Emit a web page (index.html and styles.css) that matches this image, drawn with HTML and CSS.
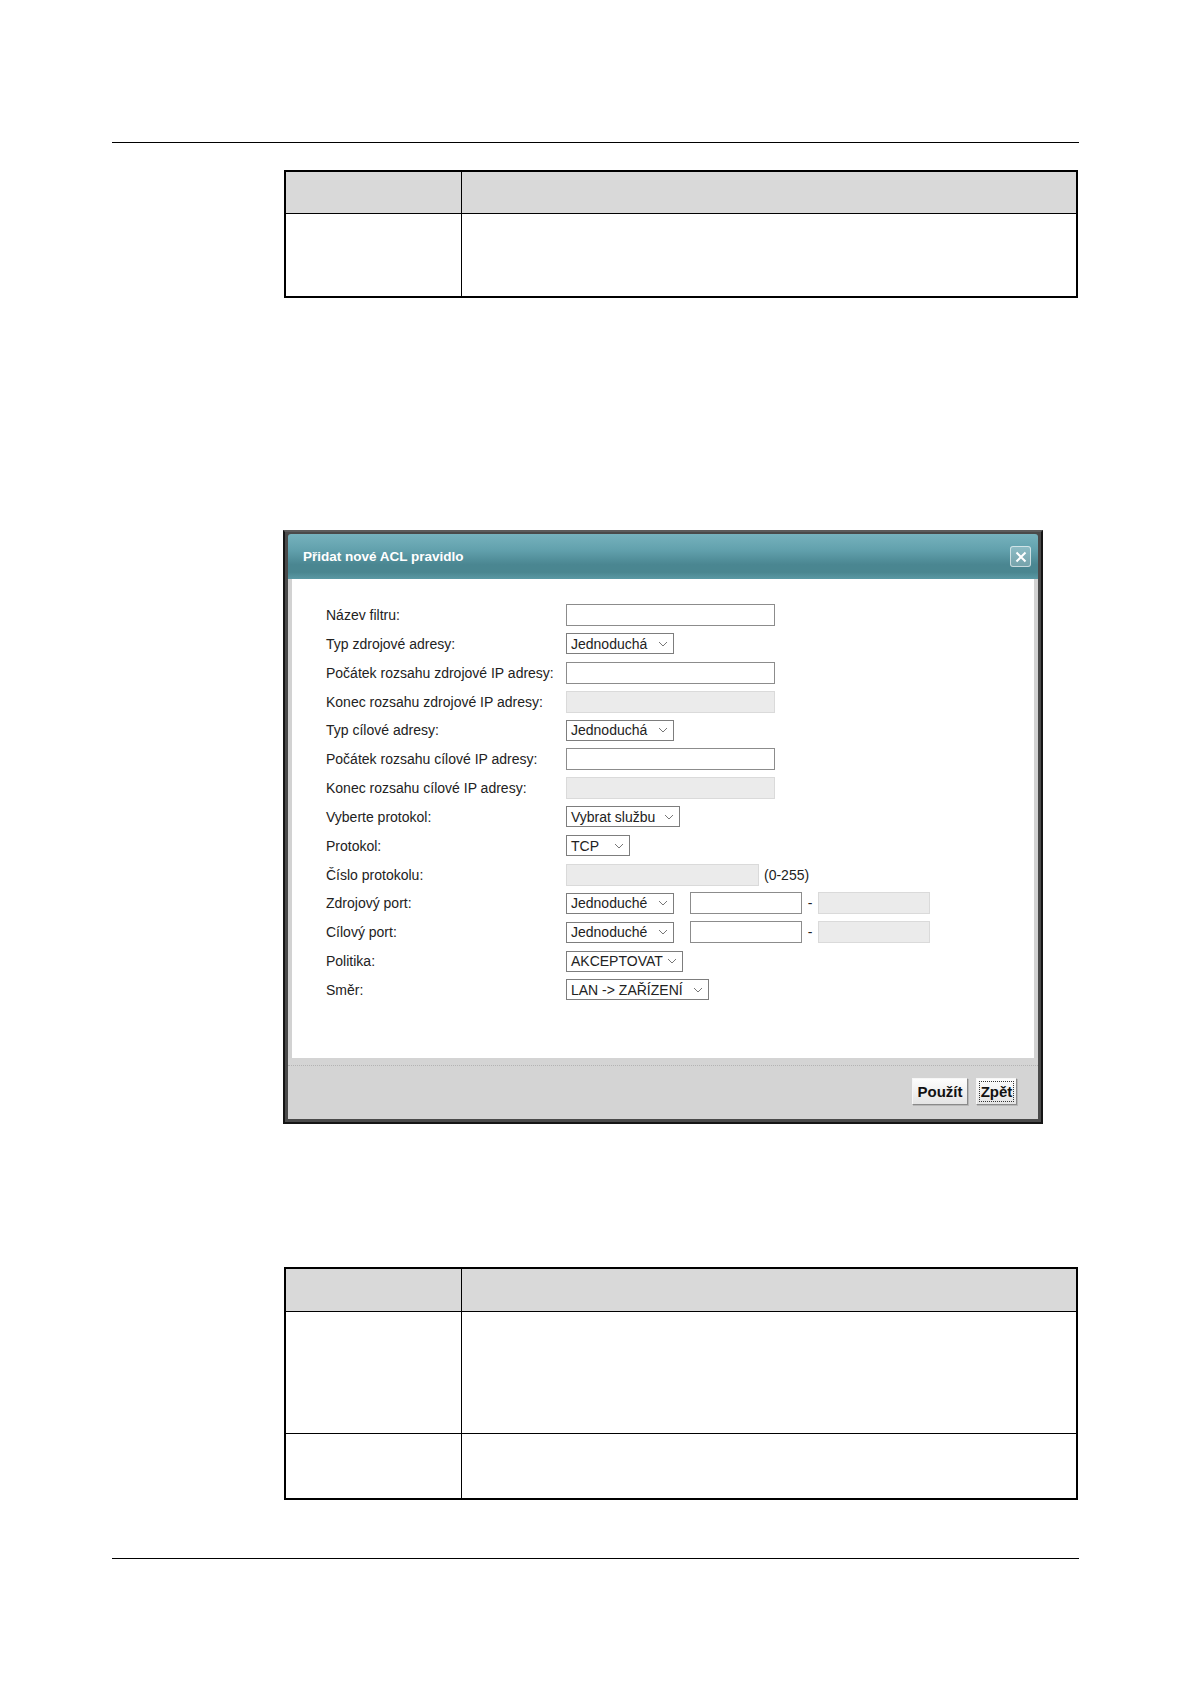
FILE: index.html
```html
<!DOCTYPE html>
<html lang="cs">
<head>
    <meta charset="UTF-8">
    <title>Přidat nové ACL pravidlo</title>
    <link rel="stylesheet" href="styles.css">
</head>
<body>
    <div class="page">
        <div class="rule"></div>

        <table class="doc-table t1">
            <tr class="head"><th class="col1"></th><th></th></tr>
            <tr class="r1"><td class="col1"></td><td></td></tr>
        </table>

        <div class="shot">
            <div class="dialog">
                <div class="dialog-title">
                    <span>Přidat nové ACL pravidlo</span>
                    <button class="close" type="button" aria-label="Zavřít">
                        <svg width="12" height="12" viewBox="0 0 12 12"><path d="M1.5 1.5 L10.5 10.5 M10.5 1.5 L1.5 10.5" stroke="#fff" stroke-width="2" fill="none"/></svg>
                    </button>
                </div>

                <div class="dialog-body">
                    <div class="row">
                        <label>Název filtru:</label>
                        <div class="ctrl"><input class="txt" type="text"></div>
                    </div>
                    <div class="row">
                        <label>Typ zdrojové adresy:</label>
                        <div class="ctrl"><div class="sel w108"><span>Jednoduchá</span><svg width="10" height="6" viewBox="0 0 10 6"><path d="M1 1 L5 5 L9 1" stroke="#777" fill="none"/></svg></div></div>
                    </div>
                    <div class="row">
                        <label>Počátek rozsahu zdrojové IP adresy:</label>
                        <div class="ctrl"><input class="txt" type="text"></div>
                    </div>
                    <div class="row">
                        <label>Konec rozsahu zdrojové IP adresy:</label>
                        <div class="ctrl"><input class="txt" type="text" disabled></div>
                    </div>
                    <div class="row">
                        <label>Typ cílové adresy:</label>
                        <div class="ctrl"><div class="sel w108"><span>Jednoduchá</span><svg width="10" height="6" viewBox="0 0 10 6"><path d="M1 1 L5 5 L9 1" stroke="#777" fill="none"/></svg></div></div>
                    </div>
                    <div class="row">
                        <label>Počátek rozsahu cílové IP adresy:</label>
                        <div class="ctrl"><input class="txt" type="text"></div>
                    </div>
                    <div class="row">
                        <label>Konec rozsahu cílové IP adresy:</label>
                        <div class="ctrl"><input class="txt" type="text" disabled></div>
                    </div>
                    <div class="row">
                        <label>Vyberte protokol:</label>
                        <div class="ctrl"><div class="sel w114"><span>Vybrat službu</span><svg width="10" height="6" viewBox="0 0 10 6"><path d="M1 1 L5 5 L9 1" stroke="#777" fill="none"/></svg></div></div>
                    </div>
                    <div class="row">
                        <label>Protokol:</label>
                        <div class="ctrl"><div class="sel w64"><span>TCP</span><svg width="10" height="6" viewBox="0 0 10 6"><path d="M1 1 L5 5 L9 1" stroke="#777" fill="none"/></svg></div></div>
                    </div>
                    <div class="row">
                        <label>Číslo protokolu:</label>
                        <div class="ctrl"><input class="txt num" type="text" disabled><span class="hint">(0-255)</span></div>
                    </div>
                    <div class="row">
                        <label>Zdrojový port:</label>
                        <div class="ctrl">
                            <div class="sel w108"><span>Jednoduché</span><svg width="10" height="6" viewBox="0 0 10 6"><path d="M1 1 L5 5 L9 1" stroke="#777" fill="none"/></svg></div>
                            <input class="txt port first" type="text">
                            <span class="dash">-</span>
                            <input class="txt port" type="text" disabled>
                        </div>
                    </div>
                    <div class="row">
                        <label>Cílový port:</label>
                        <div class="ctrl">
                            <div class="sel w108"><span>Jednoduché</span><svg width="10" height="6" viewBox="0 0 10 6"><path d="M1 1 L5 5 L9 1" stroke="#777" fill="none"/></svg></div>
                            <input class="txt port first" type="text">
                            <span class="dash">-</span>
                            <input class="txt port" type="text" disabled>
                        </div>
                    </div>
                    <div class="row">
                        <label>Politika:</label>
                        <div class="ctrl"><div class="sel w117"><span>AKCEPTOVAT</span><svg width="10" height="6" viewBox="0 0 10 6"><path d="M1 1 L5 5 L9 1" stroke="#777" fill="none"/></svg></div></div>
                    </div>
                    <div class="row">
                        <label>Směr:</label>
                        <div class="ctrl"><div class="sel w143"><span>LAN -&gt; ZAŘÍZENÍ</span><svg width="10" height="6" viewBox="0 0 10 6"><path d="M1 1 L5 5 L9 1" stroke="#777" fill="none"/></svg></div></div>
                    </div>
                </div>

                <div class="dialog-footer">
                    <div class="footer-inner">
                        <button class="btn apply" type="button">Použít</button>
                        <button class="btn back" type="button"><span>Zpět</span></button>
                    </div>
                </div>
            </div>
        </div>

        <table class="doc-table t2">
            <tr class="head"><th class="col1"></th><th></th></tr>
            <tr class="r1"><td class="col1"></td><td></td></tr>
            <tr class="r2"><td class="col1"></td><td></td></tr>
        </table>

        <div class="rule bottom"></div>
    </div>
</body>
</html>
```

FILE: styles.css
```css
body {
    margin: 0;
    background-color: #ffffff;
    font-family: "Liberation Sans", Arial, sans-serif;
    color: #222;
}

.page {
    width: 1191px;
    padding-top: 142px;
}

.rule {
    margin-left: 112px;
    width: 967px;
    border-top: 1px solid #000;
}

.rule.bottom {
    margin-top: 58px;
}

/* document tables */
.doc-table {
    margin-left: 284px;
    width: 794px;
    border-collapse: collapse;
    border: 2px solid #000;
}

.doc-table th,
.doc-table td {
    border: 1px solid #000;
    padding: 0;
}

.doc-table .col1 {
    width: 175px;
}

.doc-table .head th {
    background-color: #d9d9d9;
}

.t1 {
    margin-top: 27px;
}

.t1 .head { height: 42px; }
.t1 .r1 { height: 84px; }

.t2 {
    margin-top: 143px;
}

.t2 .head { height: 43px; }
.t2 .r1 { height: 122px; }
.t2 .r2 { height: 66px; }

/* screenshot of the dialog */
.shot {
    margin-top: 232px;
    margin-left: 283px;
    width: 760px;
    box-sizing: border-box;
    padding: 2px 3px 3px 3px;
    background-color: #4a4a4a;
    border: 2px solid #151515;
    border-top-color: #5c5c5c;
}

.dialog {
    width: 750px;
}

.dialog-title {
    height: 45px;
    display: flex;
    align-items: center;
    justify-content: space-between;
    padding: 0 7px 0 15px;
    border-radius: 3px 3px 0 0;
    background: linear-gradient(#76b2bd 0%, #62a1ad 35%, #4a8691 68%, #4a8690 85%, #5b99a4 100%);
    color: #fff;
    font-size: 13.5px;
    font-weight: bold;
}

.close {
    width: 21px;
    height: 21px;
    padding: 0;
    display: flex;
    align-items: center;
    justify-content: center;
    border: 1px solid rgba(255, 255, 255, 0.6);
    border-radius: 3px;
    background-color: rgba(255, 255, 255, 0.25);
}

.dialog-body {
    height: 479px;
    box-sizing: border-box;
    padding: 25px 0 0 34px;
    background-color: #fff;
    border-left: 4px solid #d2d2d2;
    border-right: 4px solid #d2d2d2;
    font-size: 14px;
}

.row {
    display: flex;
    align-items: center;
    height: 22px;
    margin-bottom: 6.85px;
}

.row label {
    width: 240px;
    flex-shrink: 0;
    color: #222;
}

.ctrl {
    display: flex;
    align-items: center;
}

.txt {
    width: 209px;
    height: 22px;
    box-sizing: border-box;
    margin: 0;
    padding: 0 4px;
    border: 1px solid #8c8c8c;
    background-color: #fff;
    font-family: "Liberation Sans", Arial, sans-serif;
    font-size: 14px;
}

.txt:disabled {
    background-color: #ebebeb;
    border-color: #dadada;
}

.txt.num {
    width: 193px;
}

.txt.port {
    width: 112px;
}

.txt.port.first {
    margin-left: 16px;
}

.dash {
    width: 16px;
    text-align: center;
}

.hint {
    margin-left: 5px;
}

.sel {
    display: flex;
    align-items: center;
    justify-content: space-between;
    height: 21px;
    box-sizing: border-box;
    padding: 0 5px 0 4px;
    border: 1px solid #7d7d7d;
    background-color: #fff;
    color: #222;
}

.sel svg {
    flex-shrink: 0;
}

.w64 { width: 64px; }
.w108 { width: 108px; }
.w114 { width: 114px; }
.w117 { width: 117px; }
.w143 { width: 143px; }

.dialog-footer {
    height: 61px;
    box-sizing: border-box;
    padding-top: 7px;
    background-color: #d4d4d4;
}

.footer-inner {
    display: flex;
    justify-content: flex-end;
    gap: 8px;
    padding: 12px 21px 0 0;
    border-top: 1px dotted #b3b3b3;
}

.btn {
    height: 27px;
    padding: 0;
    display: flex;
    align-items: center;
    justify-content: center;
    background: linear-gradient(#fdfdfd, #e4e4e4);
    border: 1px solid;
    border-color: #f6f6f6 #8a8a8a #8a8a8a #f6f6f6;
    box-shadow: 1px 1px 0 #b8b8b8;
    font-family: "Liberation Sans", Arial, sans-serif;
    font-size: 15px;
    font-weight: bold;
    color: #111;
}

.apply {
    width: 56px;
}

.back {
    width: 41px;
}

.back span {
    padding: 1px 1px;
    border: 1px dotted #333;
}
```
